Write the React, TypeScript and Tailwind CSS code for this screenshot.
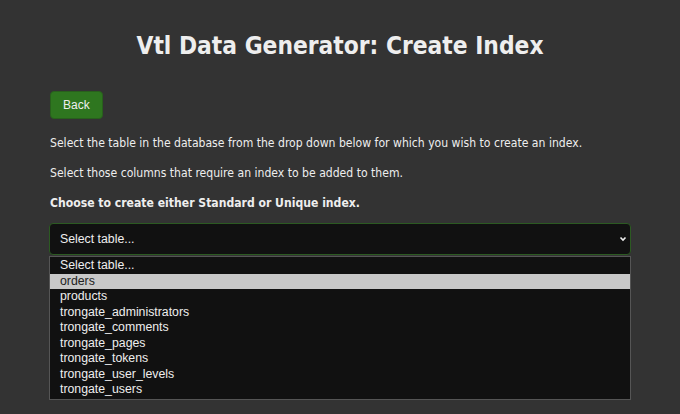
import React from 'react';

const tables = [
  'Select table...',
  'orders',
  'products',
  'trongate_administrators',
  'trongate_comments',
  'trongate_pages',
  'trongate_tokens',
  'trongate_user_levels',
  'trongate_users',
];

export default function App() {
  return (
    <div className="min-h-[414px] bg-[#333333] px-[50px] pt-[30px] text-[#eeeeee] [font-family:'DejaVu_Sans_Condensed','DejaVu_Sans',sans-serif]">
      <h1 className="text-center text-[24.3px] font-bold leading-[31px]">Vtl Data Generator: Create Index</h1>

      <button
        type="button"
        className="mt-[30px] h-[28px] rounded-[4px] border border-[#28601c] bg-[#2e761f] px-[12px] text-[12px] text-[#eeeeee] [font-family:'Liberation_Sans',Arial,sans-serif]"
      >
        Back
      </button>

      <p className="mt-[16px] text-[12.1px] leading-[16px]">
        Select the table in the database from the drop down below for which you wish to create an index.
      </p>
      <p className="mt-[14px] text-[12.1px] leading-[16px]">
        Select those columns that require an index to be added to them.
      </p>
      <p className="mt-[14px] text-[12.1px] font-bold leading-[16px]">
        Choose to create either Standard or Unique index.
      </p>

      {/* Select with its open list */}
      <div className="relative mt-[12px] w-[582px] -ml-px [font-family:'Liberation_Sans',Arial,sans-serif]">
        <div className="flex h-[32px] items-center justify-between rounded-[4px] border border-[#2c5a22] bg-[#111111] pl-[10px] pr-[3px] text-[12.3px] text-[#eeeeee]">
          <span>Select table...</span>
          <svg className="h-[8px] w-[8px]" viewBox="0 0 8 8" fill="none" stroke="#eeeeee" strokeWidth="1.6">
            <polyline points="1.5 2.5 4 5 6.5 2.5" />
          </svg>
        </div>

        <ul className="absolute left-0 top-[33px] w-full border border-[#555555] bg-[#111111] py-px text-[12.3px] leading-[15.5px]">
          {tables.map((t, i) => (
            <li
              key={t}
              className={`pl-[10px] ${i === 1 ? 'bg-[#c8c8c8] text-[#222222]' : 'text-[#eeeeee]'}`}
            >
              {t}
            </li>
          ))}
        </ul>
      </div>
    </div>
  );
}
